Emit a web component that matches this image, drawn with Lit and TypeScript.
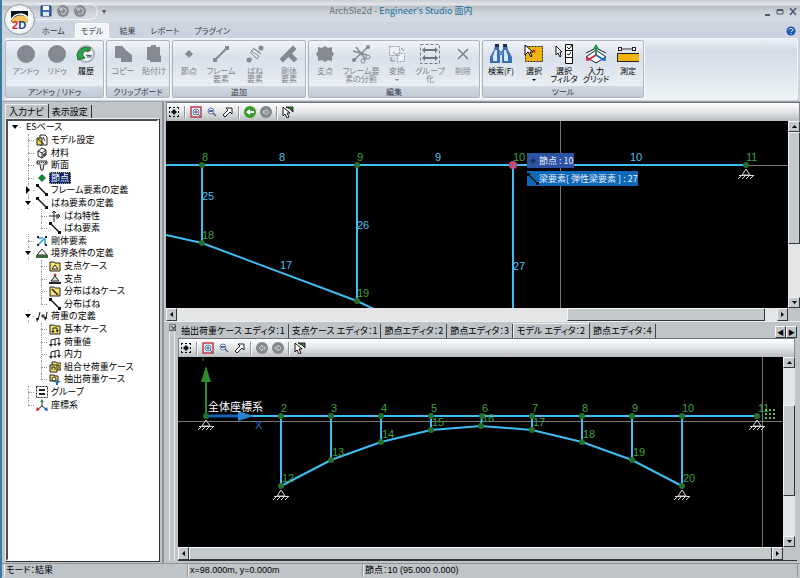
import { LitElement, html, svg, css, nothing, TemplateResult } from "lit";
import { customElement, property } from "lit/decorators.js";
import { classMap } from "lit/directives/class-map.js";

type Art = TemplateResult;

/* ---------- ribbon icons, 22 x 22 ---------- */
const G = "#858a90";
const ribbonArt: Record<string, Art> = {
  disc: svg`<circle cx="11" cy="11" r="9" fill="${G}"/>`,
  history: svg`<circle cx="11" cy="11" r="9" fill="#a9b4bd"/><circle cx="11" cy="11" r="7" fill="#eef3f5"/>
    <path d="M2 12C4 5 9 3 16 5L13 8C9 8 7 10 8 13L10 15L3 17Z" fill="#2fa045" stroke="#1b6e2e" stroke-width="1"/>
    <path d="M12 9L16 7M11 12L17 13M12 14H16" stroke="#445" stroke-width="1"/>`,
  copy: svg`<path d="M3 3H10L14 7V8H15L20 12V19H9V15H3Z" fill="${G}"/>`,
  paste: svg`<path d="M4 4H8V2H13V4H17V12L18 13V19H7V17H4Z" fill="${G}"/>`,
  node: svg`<path d="M11 7L15 11L11 15L7 11Z" fill="${G}"/>`,
  frame: svg`<path d="M5 17L17 5" stroke="${G}" stroke-width="2"/><rect x="3" y="15" width="4" height="4" fill="${G}"/><rect x="15" y="3" width="4" height="4" fill="${G}"/>`,
  spring: svg`<path d="M5 17L8 15M15 7L17 5M6 9L13 16L15 13L7 8L10 6L17 11L14 8M9 5L15 9" stroke="${G}" stroke-width="1" fill="none"/><circle cx="5" cy="17" r="2.500" fill="${G}"/><circle cx="17" cy="5" r="2.500" fill="${G}"/>`,
  rigid: svg`<path d="M5 16L15 6M11 11L16 16" stroke="${G}" stroke-width="5" stroke-linecap="square"/>`,
  support: svg`<path d="M11 3L14 5L18 4V8L20 11L18 14V18L14 17L11 19L8 17L4 18V14L2 11L4 8V4L8 5Z" fill="${G}"/>`,
  cut: svg`<path d="M3 18L19 3M6 4L16 17M3 8L17 12" stroke="${G}" stroke-width="1.500"/><circle cx="4" cy="17" r="2" fill="${G}"/><circle cx="18" cy="4" r="2" fill="${G}"/><circle cx="13" cy="18" r="2" fill="none" stroke="${G}"/><circle cx="18" cy="14" r="2" fill="none" stroke="${G}"/>`,
  convert: svg`<path d="M3.500 3.500H13.500V12.500H3.500ZM11.500 10.500H18.500V18.500H11.500Z" fill="#eef2f6" stroke="#9ba0a6" stroke-dasharray="2 1"/><path d="M5 14V18H9M15 5L18 8M7 9L12 13" stroke="${G}" fill="none"/>`,
  group: svg`<path d="M1.500 1.500H20.500V20.500H1.500Z" fill="none" stroke="#777c82" stroke-width="1" stroke-dasharray="3 2"/><path d="M4 7H18M4 15H18" stroke="#6f757b" stroke-width="2"/><path d="M3 7L6 4V10ZM19 7L16 4V10ZM3 15L6 12V18ZM19 15L16 12V18Z" fill="#6f757b"/>`,
  erase: svg`<path d="M6 6L16 16M16 6L6 16" stroke="#7b8086" stroke-width="1.500"/>`,
  find: svg`<path d="M5 2H9V6L10 8V20H0V14L4 7Z" fill="#3a6fb4"/><path d="M17 2H13V6L12 8V20H22V14L18 7Z" fill="#3a6fb4"/><path d="M3 13L5 7H7V18H3ZM14 7H16L18 13V18H14Z" fill="#d4e8f9"/><path d="M5 1H9V4H5ZM13 1H17V4H13Z" fill="#1d2f52"/><path d="M9 8H13V12H9Z" fill="#5b8cc9"/>`,
  select: svg`<rect x="2.500" y="3.500" width="17" height="15" fill="#f2b40a" stroke="#222" stroke-dasharray="2 1"/><path d="M2 2V12L5 9L8 14L9 13L7 9H10Z" fill="#fff" stroke="#000" stroke-width="1"/><circle cx="11" cy="8" r="1.500" fill="#d8232a"/>`,
  filter: svg`<path d="M3 3V12L5 10L7 14L8 13L7 9H9Z" fill="#fff" stroke="#111" stroke-width="1"/><path d="M12.500 1.500H19.500V20.500H12.500ZM12.500 7.500H19.500M12.500 14.500H19.500" fill="#fff" stroke="#111"/><path d="M14 4L16 6L19 2M14 11L16 12L18 9" stroke="#111" fill="none"/>`,
  grid: svg`<path d="M1 14L11 7L21 14L11 20Z" fill="#fff" stroke="#223" stroke-width="1"/><path d="M1 10L11 5L21 10" fill="none" stroke="#223"/><path d="M11 12V4" stroke="#1d9a3a" stroke-width="2"/><path d="M8 6L11 1L14 6Z" fill="#1d9a3a"/><path d="M11 12L3 17" stroke="#d8234a" stroke-width="2"/><path d="M1 18L2 13L6 17Z" fill="#d8234a"/><path d="M11 12L19 17" stroke="#2466c8" stroke-width="2"/><path d="M21 18L20 13L16 17Z" fill="#2466c8"/>`,
  measure: svg`<path d="M4 6H16" stroke="#333"/><rect x="1.500" y="4.500" width="3" height="3" fill="#fff" stroke="#222"/><rect x="15.500" y="4.500" width="3" height="3" fill="#fff" stroke="#222"/><rect x="0" y="10" width="22" height="8" fill="#f2b40a"/><path d="M0 10.500H22M0 18.500H22M.5 10V18" stroke="#222"/>`,
};

/* ---------- tree icons, 12 x 12 ---------- */
const folder = svg`<path d="M1 2H5L6 3H11V11H1Z" fill="#f6e36a" stroke="#222" stroke-width="1"/>`;
const treeArt: Record<string, Art> = {
  model: svg`<path d="M4 1H9L11 3V11H4Z" fill="#fff" stroke="#222"/><path d="M2 5L8 10M1 4H6V11H1Z" fill="#e8d24a" stroke="#222"/><path d="M7 3L9 7" stroke="#222"/>`,
  material: svg`<path d="M2 4L6 1L10 3V8L6 11L2 9Z" fill="#fff" stroke="#222"/><path d="M2 4L6 6V11M6 6L10 3" stroke="#222" fill="none"/><path d="M7 7L10 5V8L7 10Z" fill="#444"/>`,
  section: svg`<path d="M1 2H11V5H8L7 11H5L4 5H1Z" fill="#ddd" stroke="#333"/><path d="M1 3.500H11" stroke="#333" stroke-dasharray="1 1"/>`,
  node: svg`<path d="M6 2L10 6L6 10L2 6Z" fill="#15803a"/>`,
  line: svg`<path d="M2 2L10 10" stroke="#111" stroke-width="1.500"/><path d="M0 0H3V3H0ZM9 9H12V12H9Z" fill="#111"/>`,
  prop: svg`<path d="M5 1V12M0 6H11M8 4V9M3 3L5 1L7 3M9 4L11 6L9 8" stroke="#222" fill="none"/>`,
  rigid: svg`<path d="M2 10L9 3M2 3H7M9 4V10" stroke="#2ba3e0" stroke-width="1.500"/><path d="M1 1H3V3H1ZM9 1H11V3H9ZM1 9H3V11H1ZM9 9H11V11H9Z" fill="#123"/>`,
  bound: svg`<path d="M6 2L11 8H1Z" fill="#fff" stroke="#222"/><path d="M0 8H12V11H0Z" fill="#356b3c"/>`,
  bcase: svg`${folder}<path d="M6 5L9 9H3Z" fill="#fff" stroke="#222"/>`,
  bearing: svg`<circle cx="6" cy="2" r="1.500" fill="#c33"/><path d="M6 3L10 8H2Z" fill="#ddd" stroke="#222"/><path d="M0 9H12V11H0Z" fill="#222"/>`,
  scase: svg`${folder}<path d="M3 4L9 10" stroke="#222" stroke-width="1.500"/>`,
  load: svg`<path d="M2 10L4 2M10 9L11 2M5 6H9M7 4V8" stroke="#111" fill="none"/><path d="M0 8H3L1 12ZM8 7H11L9 11Z" fill="#111"/>`,
  lcase: svg`${folder}<path d="M4 9V5H8V8" stroke="#222" fill="none"/><path d="M2 8H6L4 10ZM7 7H10L8 10Z" fill="#222"/>`,
  value: svg`<path d="M2 9V4L10 2V8M6 3V9" stroke="#222" fill="none"/><path d="M0 8H4L2 11ZM8 7H12L10 10ZM4 8H8L6 10Z" fill="#222"/>`,
  combo: svg`<path d="M3 1H7L8 2H12V9H3Z" fill="#f6e36a" stroke="#222"/><path d="M1 4H8V11H1Z" fill="#f6e36a" stroke="#222"/><path d="M3 9V6H6V9M8 4H10V8" stroke="#222" fill="none"/>`,
  extract: svg`<path d="M1 2H5L6 3H9V8H1Z" fill="#f6e36a" stroke="#222"/><circle cx="5" cy="6" r="2" fill="#fff" stroke="#222"/><path d="M5 8H12L9 10V12H7V10Z" fill="#1f6fb5"/>`,
  group: svg`<rect x=".5" y=".5" width="11" height="11" fill="#fff" stroke="#222" stroke-dasharray="2 1"/><path d="M3 4H9M3 8H9" stroke="#222" stroke-width="2"/>`,
  axes: svg`<path d="M6 7V2" stroke="#222"/><path d="M4 3L6 0L8 3Z" fill="#1d9a3a"/><path d="M6 7L2 10M6 7L10 10" stroke="#222"/><path d="M0 12L1 8L4 11Z" fill="#d8234a"/><path d="M12 12L11 8L8 11Z" fill="#2466c8"/>`,
};

/* ---------- view toolbar icons, 12 x 12 ---------- */
const toolArt: Record<string, Art> = {
  fit: svg`<path d="M1 1.500H3M5 1.500H7M9 1.500H11M1 10.500H3M5 10.500H7M9 10.500H11M1.500 1V3M1.500 5V7M1.500 9V11M10.500 1V3M10.500 5V7M10.500 9V11" stroke="#111"/><path d="M6 3L9 6L6 9L3 6Z" fill="#111"/>`,
  zoomin: svg`<rect x="1" y="1" width="10" height="10" fill="#e9f0f8" stroke="#c53a48" stroke-width="1.500"/><circle cx="6" cy="6" r="3" fill="#fff" stroke="#5d7fa8"/><path d="M4 6H8M6 4V8M8 8L11 11" stroke="#3a5f90"/>`,
  zoomout: svg`<circle cx="5" cy="5" r="3" fill="#e6eefc" stroke="#6d7fa5"/><path d="M3 5H7" stroke="#1d3f90" stroke-width="1.500"/><path d="M7 7L10 10" stroke="#666" stroke-width="1.500"/>`,
  extents: svg`<path d="M4 2H10V8L8 6L3 11L1 9L6 4Z" fill="#fff" stroke="#222"/>`,
  back: svg`<circle cx="6" cy="6" r="6" fill="#3d9a2a"/><path d="M2 6L6 3V5H10V7H6V9Z" fill="#fff"/>`,
  backoff: svg`<circle cx="6" cy="6" r="6" fill="#83888d"/><path d="M3 6L6 3V5H9V7H6V9Z" fill="none" stroke="#c9cdd1"/>`,
  next: svg`<circle cx="6" cy="6" r="6" fill="#83888d"/><path d="M9 6L6 3V5H3V7H6V9Z" fill="none" stroke="#c9cdd1"/>`,
  pick: svg`<path d="M4 1H11V6L8 3Z" fill="#2d8a34" stroke="#222"/><path d="M1 1V10L3 8L5 12L7 11L5 7H8Z" fill="#fff" stroke="#111"/>`,
};

const icon = (art: Art, box: number) =>
  html`<svg class="ico" width=${box} height=${box} viewBox="0 0 ${box} ${box}" aria-hidden="true">${art}</svg>`;

const icoCss = css`
  * { box-sizing: border-box; }
  button { font: inherit; color: inherit; border: 0; padding: 0; background: none; }
  .ico { display: block; flex: none; }
`;

/* ---------- ribbon ---------- */
interface Cmd { art: string; label: string; w: number; on?: boolean; drop?: boolean; }
const groups: { name: string; pad?: boolean; cmds: Cmd[] }[] = [
  { name: "アンドゥ / リドゥ", pad: true, cmds: [
    { art: "disc", label: "アンドゥ", w: 32 }, { art: "disc", label: "リドゥ", w: 30 },
    { art: "history", label: "履歴", w: 28, on: true } ] },
  { name: "クリップボード", cmds: [
    { art: "copy", label: "コピー", w: 32 }, { art: "paste", label: "貼付け", w: 30 } ] },
  { name: "追加", cmds: [
    { art: "node", label: "節点", w: 32 }, { art: "frame", label: "フレーム\n要素", w: 32 },
    { art: "spring", label: "ばね\n要素", w: 36 }, { art: "rigid", label: "剛体\n要素", w: 32 } ] },
  { name: "編集", cmds: [
    { art: "support", label: "支点", w: 32 }, { art: "cut", label: "フレーム要\n素の分割", w: 40 },
    { art: "convert", label: "変換", w: 32, drop: true }, { art: "group", label: "グループ\n化", w: 34 },
    { art: "erase", label: "削除", w: 32 } ] },
  { name: "ツール", cmds: [
    { art: "find", label: "検索(F)", w: 36, on: true }, { art: "select", label: "選択", w: 30, on: true, drop: true },
    { art: "filter", label: "選択\nフィルタ", w: 30, on: true }, { art: "grid", label: "入力\nグリッド", w: 34, on: true },
    { art: "measure", label: "測定", w: 30, on: true } ] },
];

@customElement("ribbon-bar")
export class RibbonBar extends LitElement {
  static styles = [icoCss, css`
    :host { display: flex; gap: 2px; padding: 1px 0; height: 62px; margin: 0 2px 0 3px; border: 1px solid #f4f7fa; border-left: 0;
      background: linear-gradient(#edf1f7, #d3dbe7 20%, #dae1ea 45%, #eef5f6); border-radius: 0 3px 3px 0; }
    .group { display: flex; flex-direction: column; border: 1px solid #aeb6c2; border-radius: 2px; margin: 0; padding: 0;
      box-shadow: 1px 1px 0 #fafcfd; background: linear-gradient(#f1f4f9, #d9e0ea 30%, #e2e8ef 60%, #f2f7f8); }
    .cmds { display: flex; flex: 1; padding-top: 2px; }
    .cmds.pad { padding: 2px 3px 0 4px; }
    .cmd { display: flex; flex-direction: column; align-items: center; color: #7d838a; line-height: 8px; }
    .cmd.on { color: #000; }
    .label { white-space: pre; text-align: center; margin-top: 2px; }
    .drop { border: 2px solid transparent; border-top-color: currentColor; margin-top: 4px; }
    .name { height: 11px; line-height: 11px; text-align: center; color: #333a44; background: linear-gradient(#d3dae4, #bfc8d5); }
  `];
  render() {
    return groups.map((g) => html`
      <section class="group" aria-label=${g.name}>
        <div class=${classMap({ cmds: true, pad: !!g.pad })}>
          ${g.cmds.map((c) => html`
            <button class=${classMap({ cmd: true, on: !!c.on })} style="width:${c.w}px" ?disabled=${!c.on}>
              ${icon(ribbonArt[c.art], 22)}
              <span class="label">${c.label}</span>${c.drop ? html`<span class="drop"></span>` : nothing}
            </button>`)}
        </div>
        <div class="name">${g.name}</div>
      </section>`);
  }
}

/* ---------- navigation tree ---------- */
interface Row { text: string; level: number; art?: string; open?: boolean; last?: boolean; sel?: boolean; }
const rows: Row[] = [
  { text: "ESベース", level: 0, open: true },
  { text: "モデル設定", level: 1, art: "model" },
  { text: "材料", level: 1, art: "material" },
  { text: "断面", level: 1, art: "section" },
  { text: "節点", level: 1, art: "node", sel: true },
  { text: "フレーム要素の定義", level: 1, art: "line", open: false },
  { text: "ばね要素の定義", level: 1, art: "line", open: true },
  { text: "ばね特性", level: 2, art: "prop" },
  { text: "ばね要素", level: 2, art: "line", last: true },
  { text: "剛体要素", level: 1, art: "rigid" },
  { text: "境界条件の定義", level: 1, art: "bound", open: true },
  { text: "支点ケース", level: 2, art: "bcase" },
  { text: "支点", level: 2, art: "bearing" },
  { text: "分布ばねケース", level: 2, art: "scase" },
  { text: "分布ばね", level: 2, art: "line", last: true },
  { text: "荷重の定義", level: 1, art: "load", open: true },
  { text: "基本ケース", level: 2, art: "lcase" },
  { text: "荷重値", level: 2, art: "value" },
  { text: "内力", level: 2, art: "value" },
  { text: "組合せ荷重ケース", level: 2, art: "combo" },
  { text: "抽出荷重ケース", level: 2, art: "extract", last: true },
  { text: "グループ", level: 1, art: "group" },
  { text: "座標系", level: 1, art: "axes", last: true },
];

@customElement("nav-tree")
export class NavTree extends LitElement {
  static styles = [icoCss, css`
    :host { display: block; background: #fff; overflow: hidden; }
    .tree { list-style: none; margin: 0; padding: 0; display: grid; grid-template-rows: repeat(23, 1fr); height: 290px; }
    .row { display: flex; align-items: center; color: #000; white-space: nowrap; min-height: 0; }
    .l1 { padding-left: 13px; }
    .l2 { padding-left: 26px; }
    .twig { position: relative; width: 13px; align-self: stretch; margin-right: 2px; display: grid; place-items: center; flex: none; }
    .twig::before { content: ""; position: absolute; left: 7px; top: 0; bottom: 0; border-left: 1px dotted #9aa0a6; }
    .twig::after { content: ""; position: absolute; left: 7px; right: 0; top: 50%; border-top: 1px dotted #9aa0a6; }
    .last .twig::before { bottom: 50%; }
    .l0 .twig::before { display: none; }
    .arrow { position: relative; z-index: 1; width: 8px; height: 8px; }
    .text { padding: 0 2px; line-height: 12px; margin-left: 1px; }
    .sel .text { background: #0a246a; color: #fff; outline: 1px dotted #c8b060; outline-offset: -1px; }
  `];
  render() {
    return html`<ul class="tree" role="tree">${rows.map((r) => html`
      <li class=${classMap({ row: true, ["l" + r.level]: true, last: !!r.last, sel: !!r.sel })} role="treeitem" aria-level=${r.level + 1} aria-selected=${r.sel ? "true" : "false"}>
        <span class="twig">${r.open === undefined ? nothing : html`<svg class="arrow" viewBox="0 0 8 8">
          <rect width="8" height="8" fill="#fff"/><path d=${r.open ? "M1 2H7L4 6Z" : "M2 0L6 4L2 8Z"} fill="#000"/></svg>`}</span>
        ${r.art ? icon(treeArt[r.art], 12) : nothing}
        <span class="text">${r.text}</span>
      </li>`)}</ul>`;
  }
}

/* ---------- scroll bar ---------- */
@customElement("scroll-track")
export class ScrollTrack extends LitElement {
  static properties = { vertical: { type: Boolean, reflect: true }, from: { type: Number }, size: { type: Number } };
  vertical = false;
  from = 0;
  size = 100;
  static styles = [icoCss, css`
    :host { display: flex; background: #e3e5e7; min-width: 0; min-height: 0; }
    :host([vertical]) { flex-direction: column; }
    .end, .thumb { background: #c4c9cc; border: 1px solid #f4f5f6; border-right-color: #33373a; border-bottom-color: #33373a; }
    .end { flex: none; width: 11px; display: grid; place-items: center; }
    :host([vertical]) .end { width: auto; height: 11px; }
    .rail { flex: 1; display: flex; min-height: 0; }
    :host([vertical]) .rail { flex-direction: column; }
    .gap, .thumb { flex-shrink: 1; min-width: 0; min-height: 0; }
    .tip { display: block; }
  `];
  render() {
    const tip = (d: string) => html`<svg class="tip" width="7" height="7" viewBox="0 0 7 7"><path d=${d} fill="#000"/></svg>`;
    return html`
      <button class="end" aria-label="戻る">${tip(this.vertical ? "M1 5H6L3.500 2Z" : "M5 1V6L2 3.500Z")}</button>
      <div class="rail"><div class="gap" style="flex-basis:${this.from}%"></div><div class="thumb" style="flex-basis:${this.size}%"></div></div>
      <button class="end" aria-label="進む">${tip(this.vertical ? "M1 2H6L3.500 5Z" : "M2 1V6L5 3.500Z")}</button>`;
  }
}

/* ---------- view toolbar ---------- */
@customElement("view-tools")
export class ViewTools extends LitElement {
  static properties = { canBack: { type: Boolean } };
  canBack = false;
  static styles = [icoCss, css`
    :host { display: flex; align-items: center; gap: 4px; height: 19px; padding: 0 1px; border: 1px solid #83888d; border-top-color: #6e7377; border-bottom: 0;
      background: linear-gradient(#fdfdfe, #e6e8ea 45%, #b9bec1); }
    .sep { width: 1px; height: 13px; background: #8f9498; box-shadow: 1px 0 0 #fff; margin-right: 1px; }
  `];
  render() {
    const b = (a: string, label: string) => html`<button aria-label=${label}>${icon(toolArt[a], 12)}</button>`;
    const sep = html`<span class="sep"></span>`;
    return html`${b("fit", "全体表示")}${sep}${b("zoomin", "拡大")}${b("zoomout", "縮小")}${b("extents", "範囲")}${sep}
      ${b(this.canBack ? "back" : "backoff", "前へ")}${b("next", "次へ")}${sep}${b("pick", "選択")}`;
  }
}

/* ---------- model drawings ---------- */
type Pt = [number, number];
const dot = ([x, y]: Pt) => svg`<circle class="dot" cx=${x} cy=${y} r="3"/>`;
const seg = (pts: Pt[]) => svg`<polyline class="beam" points=${pts.map((p) => p.join()).join(" ")}/>`;
const num = (x: number, y: number, t: string, c = "n") => svg`<text class=${c} x=${x} y=${y}>${t}</text>`;
const pin = ([x, y]: Pt) => svg`<path class="pin" d="M${x} ${y + 4}l-4 6h8z"/><path class="pin" d="M${x - 7} ${y + 10.500}h15M${x - 8} ${y + 14}l3 -3m1 3l3 -3m1 3l3 -3m1 3l3 -3"/>`;

const viewCss = css`
  :host { display: block; position: relative; background: #000; overflow: hidden; min-width: 0; min-height: 0; }
  .art { position: absolute; inset: 0; width: 100%; height: 100%; font-size: 11px; font-family: "Liberation Sans", sans-serif; }
  .beam { fill: none; stroke: #3fbcf2; stroke-width: 2; }
  .dot { fill: #26702c; }
  .n { fill: #3fa038; }
  .m { fill: #4ec0f0; }
  .pin { fill: none; stroke: #d8d8d8; stroke-width: 1; }
  .axis { stroke: #74786e; stroke-width: 1; }
`;

@customElement("upper-view")
export class UpperView extends LitElement {
  static styles = [icoCss, viewCss, css`
    .tips { position: absolute; left: 361px; top: 32px; display: flex; flex-direction: column; align-items: flex-start; gap: 3px; font-size: 9px; color: #e6eef8; }
    .tip { display: flex; align-items: center; height: 15px; line-height: 15px; background: #0f67b8; white-space: nowrap; }
    .tip.node { background: #2c52a4; }
  `];
  render() {
    return html`<svg class="art">
      <path class="axis" d="M394.500 0V400M580 44.500H900"/>
      ${seg([[0, 44], [580, 44]])}${seg([[36, 44], [36, 122]])}${seg([[191, 44], [191, 180]])}${seg([[347, 44], [347, 400]])}
      ${seg([[0, 114], [36, 122], [191, 180], [212, 190]])}
      ${([[36, 44], [191, 44], [580, 44], [36, 122], [191, 180]] as Pt[]).map(dot)}
      <circle cx="347" cy="44" r="4" fill="#c04c78"/>
      ${pin([580, 44])}
      ${num(36, 40, "8")}${num(191, 40, "9")}${num(347, 40, "10")}${num(580, 40, "11")}${num(36, 118, "18")}${num(191, 176, "19")}
      ${num(113, 40, "8", "m")}${num(269, 40, "9", "m")}${num(464, 40, "10", "m")}${num(36, 79, "25", "m")}
      ${num(191, 108, "26", "m")}${num(347, 149, "27", "m")}${num(114, 148, "17", "m")}
    </svg>
    <div class="tips" role="tooltip">
      <div class="tip node">${icon(svg`<path d="M6 3L9 6L6 9L3 6Z" fill="#1e3558"/>`, 12)}節点 : 10</div>
      <div class="tip">${icon(treeArt.line, 12)}梁要素[ 弾性梁要素 ] : 27</div>
    </div>`;
  }
}

const deck: Pt[] = [[103, 59], [153, 59], [203, 59], [253, 59], [304, 59], [354, 59], [404, 59], [454, 59], [504, 59]];
const arch: Pt[] = [[103, 129], [153, 103], [203, 85], [253, 73], [303, 69], [354, 73], [404, 85], [454, 103], [504, 129]];

@customElement("lower-view")
export class LowerView extends LitElement {
  static styles = [icoCss, viewCss, css`
    .name { fill: #fff; font-family: "Noto Sans CJK JP", sans-serif; }
    .x { fill: #1d72c8; }
    .up { stroke: #2f8a30; stroke-width: 2; }
    .grip { fill: #5fc04a; }
  `];
  render() {
    return html`<svg class="art">
      <path class="axis" d="M0 64.500H900M584.500 0V400"/>
      ${seg([[28, 59], [579, 59]])}${deck.map((d, i) => seg([d, arch[i]]))}${seg(arch)}
      <path class="up" d="M28 59V22"/><path d="M25 1V4" stroke="#2f8a30"/><path d="M23 25L28 9L33 25Z" fill="#2f8a30"/>
      <path d="M28 59H62" stroke="#1462b8" stroke-width="3"/><path d="M60 54L76 59L60 64Z" fill="#2a83cf"/>
      ${([[28, 59], [579, 59], ...deck, ...arch] as Pt[]).map(dot)}
      ${([[28, 59], [103, 129], [504, 129], [579, 59]] as Pt[]).map(pin)}
      ${deck.map(([x], i) => num(x, 55, String(i + 2)))}${num(580, 55, "11")}
      ${arch.map(([x, y], i) => num(x + 1, y - 4, String(i + 12)))}
      ${num(77, 72, "X", "x")}${num(30, 54, "全体座標系", "name")}
      ${[587, 591, 595].map((x) => [52, 56, 60].map((y) => svg`<rect class="grip" x=${x} y=${y} width="2" height="2"/>`))}
    </svg>`;
  }
}

/* ---------- window ---------- */
@customElement("app-root")
export class AppRoot extends LitElement {
  @property() file = "ArchSIe2d";
  static styles = [icoCss, css`
    :host { display: flex; flex-direction: column; position: relative; min-height: 100vh; border-left: 2px solid #3b7b9d; background: #bfc4c8; color: #000;
      font: 8px/12px "Noto Sans CJK JP", "Liberation Sans", sans-serif; font-feature-settings: "palt"; }
    .title { display: flex; align-items: center; height: 22px; padding-left: 34px; padding-right: 2px;
      background: linear-gradient(#c9ced4, #e2e6ea 20%, #b9c0c6 30%, #cfd5db 60%, #d6dce4); }
    .quick { display: flex; align-items: center; gap: 5px; height: 17px; width: 62px; padding-left: 4px; border: 1px solid #eceff2; border-left: 0; border-radius: 0 9px 9px 0; }
    .more { width: 12px; text-align: center; color: #555; }
    .caption { flex: 1; font-size: 9px; text-align: center; color: #6b7076; margin-right: 70px; }
    .caption b { font-weight: normal; color: #176f9e; }
    .winbtns { display: flex; gap: 3px; }
    .orb { position: absolute; left: 2px; top: 4px; width: 31px; height: 31px; z-index: 2; }
    .menu { display: flex; align-items: flex-end; gap: 5px; height: 16px; padding: 0 4px 0 35px; background: #cdd4e0; }
    .tab { padding: 0 5px; line-height: 14px; height: 15px; color: #333a44; }
    .tab.on { background: #f1f4f9; border: 1px solid #fff; border-bottom: 0; border-radius: 3px 3px 0 0; }
    .help { margin-left: auto; margin-bottom: 2px; }
    .ribbon { background: #cdd4e0; padding-bottom: 1px; }
    .main { flex: 1; display: grid; grid-template-columns: 162px minmax(0, 1fr); min-height: 0; border-top: 1px solid #9da3a8; font-size: 9px; }
    .side { display: flex; flex-direction: column; padding: 1px 2px 1px 3px; border-right: 2px solid #8d9296; }
    .sidetabs { display: flex; height: 15px; align-items: flex-end; }
    .stab { height: 13px; line-height: 13px; padding: 0 3px; border-right: 1px solid #333; }
    .stab.on { height: 14px; box-shadow: inset 1px 1px 0 #eee; padding: 0 4px; }
    .box { flex: 1; border: 2px solid #fff; border-left-color: #4a4e52; border-top-color: #4a4e52; }
    .side .frame { flex: 1; display: flex; border: 1px solid #eceeef; border-right-color: #333; border-bottom-color: #333; }
    .right { display: flex; flex-direction: column; min-width: 0; }
    .pane { display: grid; grid-template: 19px minmax(0, 1fr) 13px / minmax(0, 1fr) 12px; min-height: 0; }
    .upper { flex: 187 1 187px; padding-left: 2px; }
    .upper view-tools, .lower view-tools { grid-column: 1 / 3; }
    .dock { flex: 206 1 206px; display: grid; grid-template-columns: 12px minmax(0, 1fr); min-height: 0; padding: 1px 3px 2px 2px; border-top: 1px solid #eee; }
    .grab { padding-top: 1px; display: flex; flex-direction: column; align-items: center; gap: 1px; }
    .x { width: 7px; height: 7px; line-height: 6px; font-size: 8px; border: 1px solid #777; }
    .grip { flex: 1; width: 6px; border: 1px solid #e6e8ea; border-width: 0 1px; }
    .col { display: flex; flex-direction: column; min-width: 0; min-height: 0; }
    .tabs { display: flex; height: 15px; align-items: flex-end; }
    .etab { height: 14px; line-height: 14px; padding: 0 3px; white-space: nowrap; border-right: 1px solid #444; }
    .etab.on { height: 15px; padding: 0 4px; box-shadow: inset 1px 1px 0 #f4f4f4; }
    .nav { display: flex; margin-left: auto; }
    .nav button { width: 11px; height: 12px; line-height: 9px; font-size: 7px; border: 1px solid #f4f5f6; border-right-color: #33373a; border-bottom-color: #33373a; }
    .lower { flex: 1; border-bottom: 1px solid #333; padding-right: 2px; }
    .status { display: grid; grid-template-columns: 184px 175px minmax(0, 1fr); height: 15px; line-height: 13px; font-size: 9px; border-top: 1px solid #8f9498; padding: 0 2px 1px 2px;
      font-family: "Liberation Sans", "Noto Sans CJK JP", sans-serif; }
    .cell { border-right: 1px solid #8f9498; box-shadow: inset 1px 0 0 #eef0f1; padding-left: 2px; white-space: nowrap; }
  `];
  render() {
    const tabs = ["ホーム", "モデル", "結果", "レポート", "プラグイン"];
    const editors = ["抽出荷重ケース エディタ：1", "支点ケース エディタ：1", "節点エディタ：2", "節点エディタ：3", "モデル エディタ：2", "節点エディタ：4"];
    const round = svg`<circle cx="6" cy="6" r="6" fill="#868b90"/><path d="M4 4A3 3 0 1 1 4 8M3 2V5H6" fill="none" stroke="#d4d8dc"/>`;
    return html`
      <button class="orb" aria-label="2D"><svg class="ico" width="31" height="31" viewBox="0 0 31 31">
        <circle cx="15.500" cy="15.500" r="15" fill="#eef0f2" stroke="#8f979e"/><circle cx="15.500" cy="15.500" r="12" fill="#fafbfb"/>
        <rect x="7" y="7" width="17" height="12" fill="#0b1422"/><path d="M7 18C9 11 19 9 24 14V19H7Z" fill="#f3c25d"/><path d="M7 16C11 8 20 9 24 14" stroke="#fff" stroke-width="1.500" fill="none"/>
        <text x="8" y="25" font-family="Liberation Sans, sans-serif" font-size="11" font-weight="bold"><tspan fill="#d02a30">2</tspan><tspan fill="#1c3fa8">D</tspan></text></svg></button>
      <header class="title">
        <div class="quick">
          <button aria-label="保存">${icon(svg`<path d="M1 1H11V11H1Z" fill="#3c6cc0" stroke="#203a78"/><path d="M3 1H9V5H3Z" fill="#fff"/><path d="M3 7H9V11H3Z" fill="#dfe6f0"/>`, 12)}</button>
          <button aria-label="元に戻す">${icon(round, 12)}</button><button aria-label="やり直し">${icon(round, 12)}</button>
        </div>
        <span class="more">▾</span>
        <div class="caption">${this.file} - <b>Engineer's Studio 面内</b></div>
        <div class="winbtns">
          <button aria-label="最小化">${icon(svg`<path d="M3 9H8" stroke="#4a5a6c" stroke-width="2"/>`, 10)}</button>
          <button aria-label="元のサイズ">${icon(svg`<path d="M2 4H8V8H2Z" fill="none" stroke="#4a5a6c"/><path d="M2 4H8" stroke="#4a5a6c" stroke-width="2"/>`, 10)}</button>
          <button aria-label="閉じる">${icon(svg`<path d="M2 2L8 9M8 2L2 9" stroke="#4a5a6c" stroke-width="1.500"/>`, 10)}</button>
        </div>
      </header>
      <nav class="menu">
        ${tabs.map((t, i) => html`<button class=${classMap({ tab: true, on: i === 1 })}>${t}</button>`)}
        <button class="help" aria-label="ヘルプ">${icon(svg`<circle cx="5" cy="5" r="4.500" fill="#1d57b8"/><path d="M3 4C3 2 7 2 7 4C7 5 5 5 5 6M5 7V8" stroke="#fff" fill="none"/>`, 10)}</button>
      </nav>
      <div class="ribbon"><ribbon-bar></ribbon-bar></div>
      <main class="main">
        <aside class="side">
          <div class="sidetabs"><button class="stab on">入力ナビ</button><button class="stab">表示設定</button></div>
          <div class="frame"><nav-tree class="box"></nav-tree></div>
        </aside>
        <div class="right">
          <section class="pane upper">
            <view-tools .canBack=${true}></view-tools>
            <upper-view></upper-view>
            <scroll-track vertical .from=${0} .size=${68}></scroll-track>
            <scroll-track .from=${65} .size=${33}></scroll-track>
          </section>
          <section class="dock">
            <div class="grab"><button class="x" aria-label="閉じる">×</button><span class="grip"></span></div>
            <div class="col">
              <div class="tabs">
                ${editors.map((t, i) => html`<button class=${classMap({ etab: true, on: i === 4 })}>${t}</button>`)}
                <span class="nav"><button aria-label="前のタブ">◀</button><button aria-label="次のタブ">▶</button></span>
              </div>
              <div class="pane lower">
                <view-tools></view-tools>
                <lower-view></lower-view>
                <scroll-track vertical .from=${22} .size=${54}></scroll-track>
                <scroll-track .from=${0} .size=${100}></scroll-track>
              </div>
            </div>
          </section>
        </div>
      </main>
      <footer class="status"><div class="cell">モード：結果</div><div class="cell">x=98.000m, y=0.000m</div><div class="cell">節点：10 (95.000 0.000)</div></footer>`;
  }
}
